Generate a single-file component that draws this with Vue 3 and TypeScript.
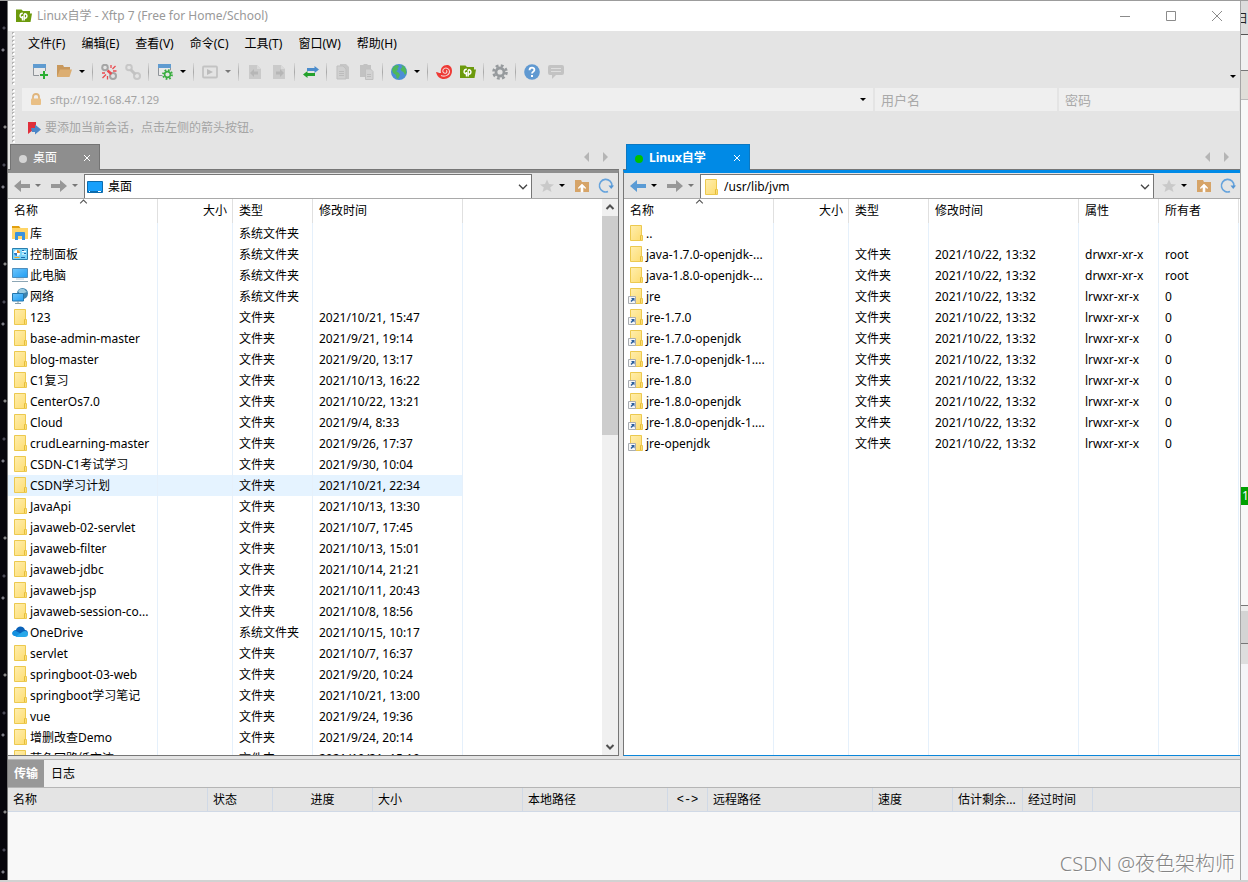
<script setup lang="ts">
import { ref } from 'vue'

interface Entry {
  icon: string
  name: string
  type: string
  date: string
  attr?: string
  owner?: string
}

const menus = ['文件(F)', '编辑(E)', '查看(V)', '命令(C)', '工具(T)', '窗口(W)', '帮助(H)']

const tools = [
  'new', 'open', 'drop', '|', 'disconnect', 'link', '|', 'props', 'drop', '|', 'play', 'dropdim', '|',
  'docleft', 'docright', '|', 'swap', '|', 'copy', 'paste', '|', 'globe', 'drop', '|', 'shell', 'ftp', '|',
  'gear', '|', 'help', 'chat',
]
const toolLabels: Record<string, string> = {
  new: '新建', open: '打开', drop: '更多', dropdim: '更多', disconnect: '断开', link: '重新连接', props: '属性',
  play: '执行', docleft: '下载', docright: '上传', swap: '同步', copy: '复制', paste: '粘贴', globe: '编码',
  shell: 'Xshell', ftp: 'Xftp', gear: '选项', help: '帮助', chat: '反馈',
}

const dir = (name: string, date: string): Entry => ({ icon: 'folder', name, type: '文件夹', date })
const sys = (icon: string, name: string, date = ''): Entry => ({ icon, name, type: '系统文件夹', date })

const local: Entry[] = [
  sys('library', '库'),
  sys('control', '控制面板'),
  sys('pc', '此电脑'),
  sys('network', '网络'),
  dir('123', '2021/10/21, 15:47'),
  dir('base-admin-master', '2021/9/21, 19:14'),
  dir('blog-master', '2021/9/20, 13:17'),
  dir('C1复习', '2021/10/13, 16:22'),
  dir('CenterOs7.0', '2021/10/22, 13:21'),
  dir('Cloud', '2021/9/4, 8:33'),
  dir('crudLearning-master', '2021/9/26, 17:37'),
  dir('CSDN-C1考试学习', '2021/9/30, 10:04'),
  dir('CSDN学习计划', '2021/10/21, 22:34'),
  dir('JavaApi', '2021/10/13, 13:30'),
  dir('javaweb-02-servlet', '2021/10/7, 17:45'),
  dir('javaweb-filter', '2021/10/13, 15:01'),
  dir('javaweb-jdbc', '2021/10/14, 21:21'),
  dir('javaweb-jsp', '2021/10/11, 20:43'),
  dir('javaweb-session-co...', '2021/10/8, 18:56'),
  sys('onedrive', 'OneDrive', '2021/10/15, 10:17'),
  dir('servlet', '2021/10/7, 16:37'),
  dir('springboot-03-web', '2021/9/20, 10:24'),
  dir('springboot学习笔记', '2021/10/21, 13:00'),
  dir('vue', '2021/9/24, 19:36'),
  dir('增删改查Demo', '2021/9/24, 20:14'),
  dir('蓝色回路纸交流', '2021/10/21, 15:19'),
]

const stamp = '2021/10/22, 13:32'
const remoteDir = (name: string): Entry => ({ ...dir(name, stamp), attr: 'drwxr-xr-x', owner: 'root' })
const remoteLink = (name: string): Entry => ({ ...dir(name, stamp), icon: 'shortcut', attr: 'lrwxr-xr-x', owner: '0' })
const remote: Entry[] = [
  { icon: 'folder', name: '..', type: '', date: '' },
  remoteDir('java-1.7.0-openjdk-...'),
  remoteDir('java-1.8.0-openjdk-...'),
  remoteLink('jre'),
  remoteLink('jre-1.7.0'),
  remoteLink('jre-1.7.0-openjdk'),
  remoteLink('jre-1.7.0-openjdk-1....'),
  remoteLink('jre-1.8.0'),
  remoteLink('jre-1.8.0-openjdk'),
  remoteLink('jre-1.8.0-openjdk-1....'),
  remoteLink('jre-openjdk'),
]

const panes = [
  { id: 'local', tab: '桌面', path: '桌面', rows: local, active: false, extra: false },
  { id: 'remote', tab: 'Linux自学', path: '/usr/lib/jvm', rows: remote, active: true, extra: true },
]
const hovered = ref('CSDN学习计划')
const user = ref('')
const pass = ref('')
const address = ref('sftp://192.168.47.129')

const jobCols = [
  ['名称', 'j200'], ['状态', 'j65'], ['进度', 'j100 mid'], ['大小', 'j150'], ['本地路径', 'j145'], ['<->', 'j40 mid mono'],
  ['远程路径', 'j165'], ['速度', 'j80'], ['估计剩余...', 'j70'], ['经过时间', 'j70'], ['', ''],
]
</script>

<template>
  <svg class="defs" aria-hidden="true">
    <defs>
      <linearGradient id="fold" x1="0" y1="0" x2="1" y2="1">
        <stop offset="0" stop-color="#ffeeae" /><stop offset="1" stop-color="#fddc6f" />
      </linearGradient>
      <linearGradient id="screen" x1="0" y1="0" x2="1" y2="1">
        <stop offset="0" stop-color="#6fc6fb" /><stop offset="1" stop-color="#1e9cf3" />
      </linearGradient>
    </defs>
    <symbol id="i-new" viewBox="0 0 16 16">
      <path d="M1.500 .5h12v11h-12z" fill="#e9e9e9" stroke="#8f9499" /><path d="M1 0h13v4H1z" fill="#5f9bd0" />
      <path d="M7 7h9v9H7z" fill="#e4e4e4" /><path d="M12 7v8M8 11h8" stroke="#2bae33" stroke-width="2" />
    </symbol>
    <symbol id="i-open" viewBox="0 0 16 16">
      <path d="M1 13V1h6l1 2h6v3" fill="#c8985c" /><path d="M1 13 4 5.500h12L13.500 13z" fill="#dcae72" />
    </symbol>
    <symbol id="i-drop" viewBox="0 0 6 4"><path d="M0 0h6L3 3z" fill="#000" /></symbol>
    <symbol id="i-dropdim" viewBox="0 0 6 4"><path d="M0 0h6L3 3z" fill="#777" /></symbol>
    <symbol id="i-disconnect" viewBox="0 0 16 16">
      <g fill="none" stroke="#a5a5a5" stroke-width="2"><circle cx="4" cy="3.500" r="2.800" /><circle cx="12" cy="12" r="3" /></g>
      <path d="M6.500 6.500l4 3.500" stroke="#ea4b50" stroke-width="2.500" />
      <path d="M10 1v3M11.500 5 14.500 2M12 7h3.500M1 9h3M5 10.500 1.500 14M6.500 12v3.500" stroke="#ea4b50" stroke-width="1.300" />
    </symbol>
    <symbol id="i-link" viewBox="0 0 16 16">
      <g fill="none" stroke="#c7c7c7" stroke-width="2"><circle cx="4" cy="3.500" r="2.800" /><circle cx="12" cy="12" r="3" /></g>
      <path d="m5.500 5.500 5 5" stroke="#c2c2c2" stroke-width="3" />
    </symbol>
    <symbol id="i-props" viewBox="0 0 16 16">
      <path d="M1.500 .5h12v11h-12z" fill="#e9e9e9" stroke="#8f9499" /><path d="M1 0h13v4H1z" fill="#5f9bd0" />
      <circle cx="10.500" cy="10.500" r="5.300" fill="#e4e4e4" />
      <circle cx="10.500" cy="10.500" r="4.500" fill="none" stroke="#39ad3e" stroke-width="1.800" stroke-dasharray="1.700 1.834" />
      <circle cx="10.500" cy="10.500" r="2.900" fill="#e4e4e4" stroke="#39ad3e" stroke-width="1.600" />
    </symbol>
    <symbol id="i-play" viewBox="0 0 16 16">
      <rect x="1" y="2.500" width="14" height="11" rx="1" fill="none" stroke="#c3c3c3" stroke-width="1.800" /><path d="M5 5v6l6-3z" fill="#bcbcbc" />
    </symbol>
    <symbol id="i-docleft" viewBox="0 0 16 16">
      <path d="M2 1h8l4 4v10H2z" fill="#cacaca" /><path d="M10 1v4h4" fill="#dadada" /><path d="M3 9l4-4v2.500h4v3H7V13z" fill="#b6b6b6" />
    </symbol>
    <symbol id="i-docright" viewBox="0 0 16 16">
      <path d="M2 1h8l4 4v10H2z" fill="#cacaca" /><path d="M10 1v4h4" fill="#dadada" /><path d="M13 9 9 5v2.500H5v3h4V13z" fill="#b6b6b6" />
    </symbol>
    <symbol id="i-swap" viewBox="0 0 16 16">
      <path d="M4 4h7.500V2L16 5.500 11.500 9V7H4z" fill="#4b8ccc" /><path d="M12 9H4.500V7L0 10.500 4.500 14v-2H12z" fill="#24a12c" />
    </symbol>
    <symbol id="i-copy" viewBox="0 0 16 16">
      <path d="M5 0h6l3 3v12H5z" fill="#c6c6c6" /><path d="M2 2h6l3 3v10H2z" fill="#d0d0d0" stroke="#bfbfbf" /><path d="M4 7.500h5M4 9.500h5M4 11.500h5" stroke="#bcbcbc" />
    </symbol>
    <symbol id="i-paste" viewBox="0 0 16 16">
      <path d="M1 1h3l1-1h3l1 1h3v12H1z" fill="#c2c2c2" /><path d="M6.500 5h5l2.500 2.500V15.500H6.500z" fill="#d2d2d2" stroke="#c0c0c0" /><path d="M8 10.500h4M8 12.500h4" stroke="#bcbcbc" />
    </symbol>
    <symbol id="i-globe" viewBox="0 0 16 16">
      <circle cx="8" cy="8" r="8" fill="#4c8ed6" />
      <path d="M1.500 4 4 1.500 7 1l1 2-1.500 1L7 6 5 7l3 2 1 2-2 4-1.500-1L5 11 2 9 1 6zM10 1l3 1 2 3 .5 4-1.500 2-1.500-3-2-1-1-2 2-2z" fill="#4fb85a" />
    </symbol>
    <symbol id="i-shell" viewBox="0 0 16 16">
      <path d="M0 8c2 0 3 1.500 5 1C4 4 7 1 11 1c3 0 5 2.500 5 6 0 5-4 8-8 8-4 0-7-2.500-8-7z" fill="#ee3a35" />
      <path d="M5 11.500c5 2 9-1.500 8.500-4.500-.4-3-4.500-4-6.300-1.500C5.800 8 8 9.700 9.700 9.200c1.600-.5 1.600-2.500.3-2.600" fill="none" stroke="#f6d6d4" stroke-width="1.100" />
    </symbol>
    <symbol id="i-ftp" viewBox="0 0 16 16">
      <path d="M0 1.500h5.500L7 3h7v2.500h2L14.500 14H0z" fill="#6c9a0d" />
      <path d="M6.500 12.500V8M6.800 5.200C3.300 5 3.300 9.800 6.200 9.800M8.200 12.500V6M8.200 5.800h.6c2.900 0 2.900 4.400-.3 4.400" fill="none" stroke="#fff" stroke-width="1.400" />
    </symbol>
    <symbol id="i-gear" viewBox="0 0 16 16">
      <circle cx="8" cy="8" r="6.500" fill="none" stroke="#969a9d" stroke-width="2.600" stroke-dasharray="2.800 2.305" /><circle cx="8" cy="8" r="4" fill="none" stroke="#969a9d" stroke-width="2.800" />
    </symbol>
    <symbol id="i-help" viewBox="0 0 16 16">
      <circle cx="8" cy="8" r="7.800" fill="#6099d1" />
      <path d="M5.500 6.200C5.600 2.800 10.500 3 10.400 6 10.300 7.700 8 7.600 8 9.600" fill="none" stroke="#fff" stroke-width="1.800" /><path d="M7 11h2v2H7z" fill="#fff" />
    </symbol>
    <symbol id="i-chat" viewBox="0 0 16 16">
      <path d="M2 1h12q2 0 2 2v6q0 2-2 2H8l-4 4v-4H2q-2 0-2-2V3q0-2 2-2z" fill="#c3c3c3" /><path d="M3 4.500h10M3 7.500h10" stroke="#dedede" />
    </symbol>
    <symbol id="i-folder" viewBox="0 0 16 16">
      <path d="M2.500 .5h11v10h1v5h-12z" fill="url(#fold)" stroke="#ecc94f" /><path d="M12.500 15v-4.500h1" fill="none" stroke="#e5bd3a" />
    </symbol>
    <symbol id="i-shortcut" viewBox="0 0 16 16">
      <path d="M2.500 .5h11v10h1v5h-12z" fill="url(#fold)" stroke="#ecc94f" /><path d="M12.500 15v-4.500h1" fill="none" stroke="#e5bd3a" />
      <path d="M.5 8.500h7v7h-7z" fill="#f7f7f7" stroke="#a9adb2" /><path d="M3 10h3.500v3.500l-1.200-1.200L3.500 14 2.500 13l1.600-1.800z" fill="#2b5f9e" />
    </symbol>
    <symbol id="i-library" viewBox="0 0 16 16">
      <path d="M0 1h7l1.500 2H0z" fill="#e2a010" /><path d="M0 3h16v11H0z" fill="#ffd567" /><path d="M3 15V8q0-1 1-1h8q1 0 1 1v7h-3v-4H6v4z" fill="#3992de" />
    </symbol>
    <symbol id="i-control" viewBox="0 0 16 16">
      <path d="M.5 2.500h15v11H.5z" fill="#78d2f8" stroke="#2a7fae" /><circle cx="5" cy="7" r="3" fill="#fff" /><path d="M5 7V4a3 3 0 0 1 3 3z" fill="#e48b26" /><path d="M5 7h-3a3 3 0 0 0 3 3z" fill="#2877c4" />
      <path d="M10 5.500h4M10 8h4" stroke="#fff" /><path d="M2.500 11.500h5" stroke="#f3a523" /><path d="M9 11.500h4" stroke="#2069ad" /><path d="M10 4.500h2M12 7.500h2" stroke="#2069ad" />
    </symbol>
    <symbol id="i-pc" viewBox="0 0 16 16">
      <path d="M.5 1.500h15v9H.5z" fill="url(#screen)" stroke="#4e8ebd" /><path d="M4 12h8" stroke="#b7cbd8" /><path d="M0 14.500h16" stroke="#8ca6b5" />
    </symbol>
    <symbol id="i-network" viewBox="0 0 16 16">
      <circle cx="10.500" cy="5.500" r="5.500" fill="#3f83ad" /><path d="M6 3q2-3 6-2l3 3-3 1-1 2-3-1z" fill="#9bcbe0" />
      <path d="M.5 5.500h11v7.500H.5z" fill="url(#screen)" stroke="#2477ad" /><path d="M3 15.500h6M6 13v2" stroke="#839caa" />
    </symbol>
    <symbol id="i-onedrive" viewBox="0 0 16 16">
      <path d="M3 11C0 10 .5 6 4 6c1-4 7-5 9 0 3.500 0 4 5 0 6z" fill="#0a62b9" /><path d="M2 12q-2-1-2-3 1-3 4-2l9 5H3z" fill="#1490df" /><path d="M3 13 11 7.500c3-1.500 5 .5 5 2.500s-1 3-3 3z" fill="#28a8ea" />
    </symbol>
    <symbol id="i-desktop" viewBox="0 0 16 16"><path d="M.5 2.500h15v11H.5z" fill="#18a0fb" stroke="#0c6cae" /><path d="M1 12.500h14" stroke="#0c6cae" /><path d="M2 12.500h1M11 12.500h3" stroke="#fff" /></symbol>
    <symbol id="i-back" viewBox="0 0 16 16"><path d="M0 8l7-6v4h9v4H7v4z" fill="currentColor" /></symbol>
    <symbol id="i-forward" viewBox="0 0 16 16"><path d="M16 8 9 2v4H0v4h9v4z" fill="currentColor" /></symbol>
    <symbol id="i-star" viewBox="0 0 16 16"><path d="m8 1.500 2 4.500 5 .4-3.800 3.200L12.500 14 8 11.500 3.500 14l1.300-4.400L1 6.400 6 6z" fill="#c9c9c9" /></symbol>
    <symbol id="i-up" viewBox="0 0 16 16"><path d="M1 2h6l1 2h7v10H1z" fill="#d6a468" /><path d="M8 6 4.500 9.500v1L7 9v5h2V9l2.500 1.500v-1z" fill="#fff" stroke="#fff" stroke-width=".6" /></symbol>
    <symbol id="i-refresh" viewBox="0 0 16 16"><path d="M10 13.500A6.300 6.300 0 1 1 14 8" fill="none" stroke="#66a3dc" stroke-width="1.600" /><path d="M10.500 7.500H16L13.200 11z" fill="#5596d4" /></symbol>
    <symbol id="i-chev" viewBox="0 0 10 6"><path d="M1 .8 5 4.800 9 .8" fill="none" stroke="currentColor" stroke-width="1.300" /></symbol>
    <symbol id="i-bold-chev" viewBox="0 0 10 6"><path d="M1.500 1 5 4.500 8.500 1" fill="none" stroke="currentColor" stroke-width="2" /></symbol>
    <symbol id="i-lock" viewBox="0 0 16 16"><path d="M5 7V5q0-3 3-3t3 3v2" fill="none" stroke="#e0b57c" stroke-width="1.800" /><rect x="3" y="6.500" width="10" height="6.500" rx="1" fill="#e9bf85" /></symbol>
    <symbol id="i-flag" viewBox="0 0 16 16"><path d="M2 2h8v5l-3 3-5 4z" fill="#e02f3b" /><path d="M5 8h4V4.500L15 9.500 9 14.500V12H6z" fill="#4b86c8" /></symbol>
  </svg>

  <div class="desktop">
    <div class="stars"></div>
    <div class="window">
      <header class="title">
        <svg class="ic"><use href="#i-ftp" /></svg>
        <h1>Linux自学 - Xftp 7 (Free for Home/School)</h1>
        <button class="win" aria-label="最小化"><svg viewBox="0 0 10 10"><path d="M0 5.500h10" /></svg></button>
        <button class="win" aria-label="最大化"><svg viewBox="0 0 10 10"><path d="M.5 .5h9v9h-9z" /></svg></button>
        <button class="win" aria-label="关闭"><svg viewBox="0 0 10 10"><path d="m0 0 10 10M10 0 0 10" /></svg></button>
      </header>

      <nav class="menu grip">
        <button v-for="m in menus" :key="m">{{ m }}</button>
      </nav>

      <div class="tools grip">
        <template v-for="(t, i) in tools" :key="i">
          <span v-if="t === '|'" class="sep"></span>
          <button v-else :class="t.startsWith('drop') ? 'arrow' : 'tool'" :aria-label="toolLabels[t]">
            <svg><use :href="'#i-' + t" /></svg>
          </button>
        </template>
        <button class="arrow overflow" aria-label="工具栏选项"><svg><use href="#i-drop" /></svg></button>
      </div>

      <div class="address grip">
        <div class="field url">
          <svg class="ic"><use href="#i-lock" /></svg>
          <input v-model="address" aria-label="地址" />
          <button class="arrow" aria-label="地址历史"><svg><use href="#i-drop" /></svg></button>
        </div>
        <div class="field"><input v-model="user" placeholder="用户名" aria-label="用户名" /></div>
        <div class="field"><input v-model="pass" type="password" placeholder="密码" aria-label="密码" /></div>
      </div>

      <div class="hint grip">
        <svg class="ic"><use href="#i-flag" /></svg>
        <span>要添加当前会话，点击左侧的箭头按钮。</span>
      </div>

      <main class="panes">
        <section v-for="p in panes" :key="p.id" class="pane" :class="{ active: p.active }">
          <div class="tabs">
            <div class="tab">
              <i class="dot"></i><span>{{ p.tab }}</span>
              <button aria-label="关闭标签"><svg viewBox="0 0 6 6"><path d="m0 0 6 6M6 0 0 6" /></svg></button>
            </div>
            <div class="scrolls">
              <button aria-label="向左"><svg viewBox="0 0 5 10"><path d="M5 0v10L0 5z" /></svg></button>
              <button aria-label="向右"><svg viewBox="0 0 5 10"><path d="M0 0v10l5-5z" /></svg></button>
            </div>
          </div>
          <div class="body">
            <div class="nav">
              <button class="go back" aria-label="后退"><svg><use href="#i-back" /></svg></button>
              <button class="arrow" aria-label="后退历史"><svg><use :href="p.active ? '#i-drop' : '#i-dropdim'" /></svg></button>
              <button class="go fwd" aria-label="前进"><svg><use href="#i-forward" /></svg></button>
              <button class="arrow" aria-label="前进历史"><svg><use href="#i-dropdim" /></svg></button>
              <div class="path">
                <svg class="ic"><use :href="p.active ? '#i-folder' : '#i-desktop'" /></svg>
                <input :value="p.path" aria-label="路径" />
                <button class="chev" aria-label="展开"><svg><use href="#i-chev" /></svg></button>
              </div>
              <button class="act" aria-label="收藏"><svg><use href="#i-star" /></svg></button>
              <button class="arrow" aria-label="收藏列表"><svg><use href="#i-drop" /></svg></button>
              <button class="act up" aria-label="上级目录"><svg><use href="#i-up" /></svg></button>
              <button class="act" aria-label="刷新"><svg><use href="#i-refresh" /></svg></button>
            </div>
            <div class="list">
              <div class="view">
                <table>
                  <colgroup>
                    <col class="c150" /><col class="c75" /><col class="c80" /><col class="c150" />
                    <template v-if="p.extra"><col class="c80" /><col class="c80" /></template>
                    <col />
                  </colgroup>
                  <thead>
                    <tr>
                      <th class="sorted">名称<svg><use href="#i-chev" /></svg></th>
                      <th class="num">大小</th>
                      <th>类型</th>
                      <th>修改时间</th>
                      <template v-if="p.extra"><th>属性</th><th>所有者</th></template>
                      <th class="rest"></th>
                    </tr>
                  </thead>
                  <tbody>
                    <tr v-for="r in p.rows" :key="r.name" :class="{ hot: r.name === hovered }">
                      <td class="name"><svg class="ic"><use :href="'#i-' + r.icon" /></svg><span>{{ r.name }}</span></td>
                      <td></td>
                      <td>{{ r.type }}</td>
                      <td>{{ r.date }}</td>
                      <template v-if="p.extra"><td>{{ r.attr }}</td><td>{{ r.owner }}</td></template>
                      <td class="rest"></td>
                    </tr>
                    <tr v-if="p.extra" class="filler"><td v-for="n in 6" :key="n"></td><td class="rest"></td></tr>
                  </tbody>
                </table>
              </div>
              <div v-if="!p.extra" class="scrollbar">
                <button class="flip" aria-label="向上滚动"><svg><use href="#i-bold-chev" /></svg></button>
                <div class="track"><div class="thumb"></div></div>
                <button aria-label="向下滚动"><svg><use href="#i-bold-chev" /></svg></button>
              </div>
            </div>
          </div>
        </section>
      </main>

      <section class="jobs">
        <div class="jobtabs">
          <button class="on">传输</button>
          <button>日志</button>
        </div>
        <table>
          <thead>
            <tr><th v-for="(c, i) in jobCols" :key="i" :class="c[1]">{{ c[0] }}</th></tr>
          </thead>
        </table>
        <div class="mark">CSDN @夜色架构师</div>
      </section>
    </div>
    <aside class="behind">
      <div class="b-top">日</div>
      <div class="b-bar"></div>
      <div class="b-bar two"></div>
      <div class="b-page"><span class="badge">1</span></div>
      <div class="b-tool"></div>
      <div class="b-status"></div>
      <div class="b-end"></div>
    </aside>
  </div>
</template>

<style>
body { margin: 0; overflow: hidden; }
</style>

<style scoped>
.defs { position: absolute; width: 0; height: 0; }
.desktop {
  display: flex; height: 100vh; box-sizing: border-box; border-top: 1px solid #9c9c9c; border-bottom: 2px solid #d2d2d2;
  font: 12px/20px "Noto Sans", "Noto Sans CJK SC", sans-serif; color: #000;
}
button { border: 0; padding: 0; background: none; font: inherit; color: inherit; display: flex; align-items: center; justify-content: center; }
input { border: 0; padding: 0; background: none; font: inherit; color: inherit; outline: 0; min-width: 0; flex: 1; }
svg { display: block; flex: none; }
.ic { width: 16px; height: 16px; }

.stars {
  width: 7px; border-right: 1px solid #777;
  background-color: #07060c;
  background-image: radial-gradient(circle at 4px 27px, #4a4a56 0 1px, transparent 2px), radial-gradient(circle at 3px 49px, #7d7d86 0 1px, transparent 2px), radial-gradient(circle at 5px 126px, #888 0 1px, transparent 2px);
  background-size: 7px 137px;
}
.window { flex: 1; min-width: 0; display: flex; flex-direction: column; background: #e4e4e4; }

.title { display: flex; align-items: center; height: 30px; background: #fff; color: #999; padding-left: 8px; }
.title h1 { margin: 0 auto 0 5px; font-size: 12px; font-weight: 400; white-space: nowrap; }
.win { width: 46px; height: 30px; }
.win svg { width: 10px; height: 10px; overflow: visible; fill: none; stroke: #8b8b8b; }

.grip {
  display: flex; align-items: center; padding-left: 20px;
  background: radial-gradient(circle at 1px 1px, #fff 0 1px, transparent 1px) 5px 2px / 4px 4px repeat-y, radial-gradient(circle at 1px 1px, #b4b4b4 0 1px, transparent 1px) 4px 1px / 4px 4px repeat-y;
}
.menu { height: 26px; gap: 16px; }
.tools { height: 29px; }
.tool { width: 24px; height: 24px; }
.tool svg { width: 16px; height: 16px; }
.arrow { width: 12px; height: 20px; margin-right: 1px; }
.arrow svg { width: 6px; height: 4px; }
.overflow { margin: 10px 1px 0 auto; }
.sep { width: 1px; height: 18px; margin: 0 4px 0 3px; background: linear-gradient(#d8d8d8, #a8a8a8, #d8d8d8); }
.address { display: grid; grid-template-columns: 851fr 182fr 180fr; height: 23px; gap: 2px; padding-left: 14px; padding-right: 1px; margin-top: 2px; }
.field { display: flex; align-items: center; height: 23px; min-width: 0; background: #efefef; color: #a3a3a3; font-size: 13px; box-sizing: border-box; padding-left: 6px; }
.field input::placeholder { color: #a9a9a9; }
.url { font-size: 11px; }
.url .ic { margin-right: 6px; }
.url .arrow { margin-right: 4px; }
.hint { height: 33px; color: #a5a5a5; padding-left: 18px; gap: 3px; }

.panes { flex: 1; min-height: 0; display: grid; grid-template-columns: 611fr 617fr; grid-template-rows: minmax(0, 1fr); gap: 4px; }
.pane { min-width: 0; display: flex; flex-direction: column; }
.tabs { display: flex; height: 25px; padding-left: 2px; justify-content: space-between; border-bottom: 1px solid #767676; }
.active .tabs { padding-left: 3px; }
.tab { box-sizing: border-box; width: 90px; display: flex; align-items: center; padding: 0 9px 0 8px; background: #8e8e8e; border: 1px solid #747474; border-bottom: 0; color: #fff; margin-bottom: -1px; }
.active .tab { width: 124px; background: #008ae6; border-color: #0b78c2; font-weight: 700; }
.dot { width: 8px; height: 8px; border-radius: 4px; background: #d4d4d4; margin: 2px 6px 0 0; }
.active .dot { background: #00c000; }
.tab button { margin-left: auto; }
.tab svg { width: 6px; height: 6px; stroke: #fff; }
.scrolls { display: flex; gap: 14px; padding-right: 11px; }
.scrolls svg { width: 5px; height: 10px; fill: #b5b5b5; }
.body { flex: 1; min-height: 0; display: flex; flex-direction: column; border-top: 3px solid #8e8e8e; border-right: 1px solid #767676; border-bottom: 1px solid #767676; }
.active .body { border-top-color: #008ae6; border-right: 0; border-left: 1px solid #767676; border-bottom-color: #0b86da; }

.nav { display: flex; align-items: center; height: 25px; border-bottom: 1px solid #a9a9a9; padding-right: 3px; }
.go { width: 24px; padding-left: 4px; box-sizing: border-box; color: #979797; height: 24px; }
.go svg { width: 16px; height: 16px; }
.active .back { color: #5a9bd5; }
.path { flex: 1; min-width: 0; display: flex; align-items: center; height: 24px; align-self: flex-end; box-sizing: border-box; background: #fff; border: 1px solid #767676; border-bottom: 0; margin: 0 6px 0 2px; padding: 1px 0 0 2px; gap: 5px; }
.chev { width: 16px; height: 20px; color: #444; }
.chev svg, .scrollbar svg { width: 10px; height: 6px; }
.act { width: 18px; height: 24px; }
.act svg { width: 16px; height: 16px; }
.up { margin: 0 6px 0 4px; }

.list { flex: 1; min-height: 0; display: flex; background: #fff; }
.view { flex: 1; min-width: 0; overflow: hidden; }
.view table { width: 100%; height: 100%; table-layout: fixed; border-collapse: separate; border-spacing: 0; }
.c150 { width: 150px; }
.c75 { width: 75px; }
.c80 { width: 80px; }
.view th, .view td { box-sizing: border-box; padding: 0 6px; text-align: left; font-weight: 400; border-right: 1px solid #e5f0fb; white-space: nowrap; overflow: hidden; height: 21px; line-height: 21px; }
.view th { height: 24px; padding-bottom: 2px; border-right-color: #e0e0e0; }
.view .num { text-align: right; padding-right: 5px; }
.view .rest { border-right: 0; padding: 0; }
.sorted { position: relative; }
.sorted svg { position: absolute; left: 71px; top: 0; width: 9px; height: 5px; transform: rotate(180deg); color: #555; }
.view .name { padding: 0 0 0 4px; }
.name .ic { display: inline-block; vertical-align: top; margin: 2px 2px 0 0; }
.hot td:not(.rest) { background: #e5f3ff; }
.view .filler td { height: auto; }
.scrollbar { width: 16px; display: flex; flex-direction: column; background: #f0f0f0; color: #505050; }
.scrollbar button { height: 17px; }
.scrollbar .flip { transform: rotate(180deg); }
.track { flex: 1; }
.thumb { height: 42%; background: #cdcdcd; }

.jobs { height: 120px; margin-top: 3px; border-top: 1px solid #b5b5b5; background: #f8f8f8; position: relative; }
.jobtabs { display: flex; height: 27px; background: #efefef; border-bottom: 1px solid #b5b5b5; }
.jobtabs button { width: 36px; height: 27px; }
.jobtabs .on { background: #989898; color: #fff; font-weight: 700; }
.jobtabs button + button { width: 38px; }
.jobs table { width: 100%; table-layout: fixed; border-collapse: separate; border-spacing: 0; }
.jobs th { box-sizing: border-box; height: 24px; padding: 0 5px; background: #e4e4e4; border-right: 1px solid #d0d9e6; border-bottom: 1px solid #d0d9e6; text-align: left; font-weight: 400; white-space: nowrap; }
.jobs th:last-child { border-right: 0; }
.jobs .mid { text-align: center; }
.jobs .mono { font-family: "Liberation Mono", monospace; }
.j200 { width: 200px; } .j65 { width: 65px; } .j100 { width: 100px; } .j150 { width: 150px; } .j145 { width: 145px; }
.j40 { width: 40px; } .j165 { width: 165px; } .j80 { width: 80px; } .j70 { width: 70px; }
.mark { position: absolute; right: 5px; bottom: 3px; font-size: 20px; font-weight: 300; line-height: 26px; color: #858585; text-shadow: 1px 1px 0 #fff; }

.behind { width: 8px; display: flex; flex-direction: column; overflow: hidden; background: #f8f8f8; box-sizing: border-box; border-left: 1px solid #a5a5a5; }
.b-top { height: 33px; line-height: 36px; background: #dcdcdc; border-bottom: 1px solid #555; text-indent: -5px; color: #222; }
.b-bar { height: 35px; background: #f0f0f0; border-bottom: 1px solid #777; }
.b-bar.two { height: 28px; background: #e0ded9; border-bottom-color: #bbb; }
.b-page { flex: 1; border-bottom: 1px solid #777; padding-top: 387px; }
.badge { display: block; height: 18px; line-height: 18px; background: #00a000; color: #fff; padding-left: 1px; font-size: 12px; }
.b-tool { height: 32px; border-bottom: 1px solid #777; border-top: 5px solid #ededed; background: #d4d4d4; }
.b-status { height: 20px; background: #dedede; }
.b-end { height: 216px; background: #f5f5f8; }
</style>
